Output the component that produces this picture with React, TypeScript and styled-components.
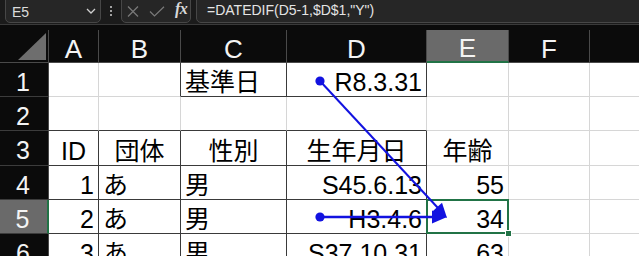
import React from 'react';
import styled, { createGlobalStyle, css } from 'styled-components';

const GlobalStyle = createGlobalStyle`
  html, body { margin: 0; padding: 0; background: #0b0b0b; }
  body {
    width: 639px; height: 256px; overflow: hidden;
    font-family: "Liberation Sans", "Noto Sans CJK JP", sans-serif;
  }
  * { box-sizing: border-box; }
`;

const Page = styled.div`
  position: relative;
  width: 639px;
  height: 256px;
  overflow: hidden;
  background: #0b0b0b;
`;

/* ---------- formula bar ---------- */
const Bar = styled.div`
  height: 25px;
  display: flex;
  align-items: flex-end;
  padding: 0 0 1px 5px;
  background: #1b1b1b;
  border-bottom: 1px solid #3a3a3a;
  overflow: hidden;
`;

const BarBox = styled.div<{ $w?: number }>`
  height: 28px;
  flex: ${p => (p.$w ? `0 0 ${p.$w}px` : '1 0 auto')};
  margin-right: ${p => (p.$w ? '0' : '-12px')};
  display: flex;
  align-items: flex-end;
  background: #262626;
  border: 1px solid #474747;
  border-radius: 5px;
`;

const NameText = styled.span`
  flex: 1;
  padding: 0 0 3px 6px;
  font-size: 14px;
  line-height: 14px;
  color: #dcdcdc;
`;

const Chevron = styled.svg`
  margin: 0 4px 8px 0;
  flex: 0 0 auto;
`;

const Kebab = styled.div`
  flex: 0 0 20px;
  align-self: stretch;
  display: flex;
  flex-direction: column;
  align-items: center;
  justify-content: flex-end;
  gap: 2px;
  padding-bottom: 7px;
`;

const KebabDot = styled.span`
  width: 2px;
  height: 2px;
  background: #cfcfcf;
  border-radius: 1px;
`;

const FxIcons = styled.div`
  display: flex;
  align-items: flex-end;
  gap: 10px;
  padding: 0 0 5px 5px;
`;

const FxLabel = styled.span`
  font-family: "Liberation Serif", "DejaVu Serif", serif;
  font-style: italic;
  font-weight: bold;
  font-size: 16px;
  line-height: 16px;
  color: #d8d8d8;
  letter-spacing: -0.5px;
`;

const Formula = styled.span`
  padding: 0 0 5px 10px;
  font-size: 14px;
  line-height: 14px;
  color: #e4e4e4;
  white-space: nowrap;
`;

const Spacer = styled.div<{ $w: number }>`
  flex: 0 0 ${p => p.$w}px;
`;

/* ---------- sheet ---------- */
const Sheet = styled.div`
  margin-top: 5px;
  display: grid;
  grid-template-columns: 49px 50px 82px 106px 140px 82px 81px 60px;
  grid-template-rows: 33px 34px 34px 35px 34px 34px 34px;
`;

const Corner = styled.div`
  background: #0b0b0b;
  border-right: 1px solid #4a4a4a;
  border-bottom: 1px solid #4a4a4a;
  display: flex;
  align-items: flex-end;
  justify-content: flex-end;
  padding: 0 2px 2px 0;
`;

const ColHeader = styled.div<{ $sel?: boolean }>`
  background: ${p => (p.$sel ? '#6a6a6a' : '#0b0b0b')};
  color: #f4f4f4;
  font-size: 26px;
  line-height: 28px;
  display: flex;
  justify-content: center;
  align-items: center;
  padding-top: 5px;
  border-right: 1px solid #4a4a4a;
  border-bottom: ${p => (p.$sel ? '2px solid #217346' : '1px solid #4a4a4a')};
`;

const RowHeader = styled.div<{ $sel?: boolean }>`
  background: ${p => (p.$sel ? '#6a6a6a' : '#0b0b0b')};
  color: #f4f4f4;
  font-size: 25px;
  line-height: 28px;
  display: flex;
  justify-content: center;
  align-items: center;
  padding: 4px 2px 0 0;
  border-bottom: 1px solid #3c3c3c;
  border-right: ${p => (p.$sel ? '2px solid #217346' : '1px solid #4a4a4a')};
`;

type Align = 'left' | 'right' | 'center';

const Cell = styled.div<{ $align: Align; $right: boolean; $bottom: boolean; $sel?: boolean }>`
  position: relative;
  background: #ffffff;
  color: #000;
  font-size: 25px;
  line-height: 28px;
  white-space: nowrap;
  display: flex;
  align-items: flex-end;
  padding: 0 4px;
  justify-content: ${p => (p.$align === 'left' ? 'flex-start' : p.$align === 'right' ? 'flex-end' : 'center')};
  border-right: 1px solid ${p => (p.$right ? '#3a3a3a' : '#d6d6d6')};
  border-bottom: 1px solid ${p => (p.$bottom ? '#3a3a3a' : '#d6d6d6')};
  ${p =>
    p.$sel &&
    css`
      &::after {
        content: '';
        position: absolute;
        left: -1px;
        top: -1px;
        right: -1px;
        bottom: -1px;
        border: 2px solid #217346;
        pointer-events: none;
      }
      &::before {
        content: '';
        position: absolute;
        right: -4px;
        bottom: -4px;
        width: 5px;
        height: 5px;
        background: #217346;
        border: 1px solid #ffffff;
        z-index: 2;
      }
    `}
`;

const Overlay = styled.svg`
  position: absolute;
  left: 0;
  top: 0;
  pointer-events: none;
`;

interface CellDef {
  t?: string;
  a?: Align;
}

const colNames = ['A', 'B', 'C', 'D', 'E', 'F', ''];

const rows: CellDef[][] = [
  [{}, {}, { t: '基準日', a: 'left' }, { t: 'R8.3.31', a: 'right' }, {}, {}, {}],
  [{}, {}, {}, {}, {}, {}, {}],
  [
    { t: 'ID', a: 'center' },
    { t: '団体', a: 'center' },
    { t: '性別', a: 'center' },
    { t: '生年月日', a: 'center' },
    { t: '年齢', a: 'center' },
    {},
    {},
  ],
  [
    { t: '1', a: 'right' },
    { t: 'あ', a: 'left' },
    { t: '男', a: 'left' },
    { t: 'S45.6.13', a: 'right' },
    { t: '55', a: 'right' },
    {},
    {},
  ],
  [
    { t: '2', a: 'right' },
    { t: 'あ', a: 'left' },
    { t: '男', a: 'left' },
    { t: 'H3.4.6', a: 'right' },
    { t: '34', a: 'right' },
    {},
    {},
  ],
  [
    { t: '3', a: 'right' },
    { t: 'あ', a: 'left' },
    { t: '男', a: 'left' },
    { t: 'S37.10.31', a: 'right' },
    { t: '63', a: 'right' },
    {},
    {},
  ],
];

const darkRight = (r: number, c: number) => {
  if (r === 1) return c >= 1 && c <= 3;
  if (r >= 3) return c <= 3;
  return false;
};
const darkBottom = (r: number, c: number) => {
  if (r === 1) return c === 2 || c === 3;
  if (r >= 2) return c <= 3;
  return false;
};

const BLUE = '#1212e0';

export default function App() {
  return (
    <Page>
      <GlobalStyle />
      <Bar>
        <BarBox $w={96}>
          <NameText>E5</NameText>
          <Chevron width="10" height="6" viewBox="0 0 10 6">
            <polyline points="1,1 5,5 9,1" fill="none" stroke="#cfcfcf" strokeWidth="1.3" />
          </Chevron>
        </BarBox>
        <Kebab>
          <KebabDot />
          <KebabDot />
          <KebabDot />
        </Kebab>
        <BarBox $w={70}>
          <FxIcons>
            <svg width="12" height="11" viewBox="0 0 12 11">
              <path d="M1 0.5 L11 10.5 M11 0.5 L1 10.5" stroke="#7a7a7a" strokeWidth="1.2" fill="none" />
            </svg>
            <svg width="16" height="11" viewBox="0 0 16 11">
              <polyline points="1,5.5 5.5,10 15,0.8" stroke="#7a7a7a" strokeWidth="1.2" fill="none" />
            </svg>
            <FxLabel>fx</FxLabel>
          </FxIcons>
        </BarBox>
        <Spacer $w={5} />
        <BarBox>
          <Formula>=DATEDIF(D5-1,$D$1,"Y")</Formula>
        </BarBox>
      </Bar>

      <Sheet>
        <Corner>
          <svg width="28" height="27" viewBox="0 0 28 27">
            <polygon points="28,0 28,27 0,27" fill="#6e6e6e" />
          </svg>
        </Corner>
        {colNames.map((n, i) => (
          <ColHeader key={`h${i}`} $sel={n === 'E'}>
            {n}
          </ColHeader>
        ))}
        {rows.map((row, ri) => {
          const r = ri + 1;
          return (
            <React.Fragment key={`r${r}`}>
              <RowHeader $sel={r === 5}>{r}</RowHeader>
              {row.map((cell, c) => (
                <Cell
                  key={`c${r}-${c}`}
                  $align={cell.a ?? 'left'}
                  $right={darkRight(r, c)}
                  $bottom={darkBottom(r, c)}
                  $sel={r === 5 && c === 4}
                >
                  {cell.t}
                </Cell>
              ))}
            </React.Fragment>
          );
        })}
      </Sheet>

      <Overlay width="639" height="256" viewBox="0 0 639 256">
        <line x1="320" y1="81" x2="438" y2="208" stroke={BLUE} strokeWidth="2" />
        <polygon points="447,218 432.4,211.6 442,202.8" fill={BLUE} />
        <circle cx="320" cy="81" r="4.6" fill={BLUE} />
        <line x1="320" y1="217" x2="434" y2="217" stroke={BLUE} strokeWidth="2.4" />
        <polygon points="447,217 432,210.5 432,223.5" fill={BLUE} />
        <circle cx="320" cy="217" r="4.6" fill={BLUE} />
      </Overlay>
    </Page>
  );
}
